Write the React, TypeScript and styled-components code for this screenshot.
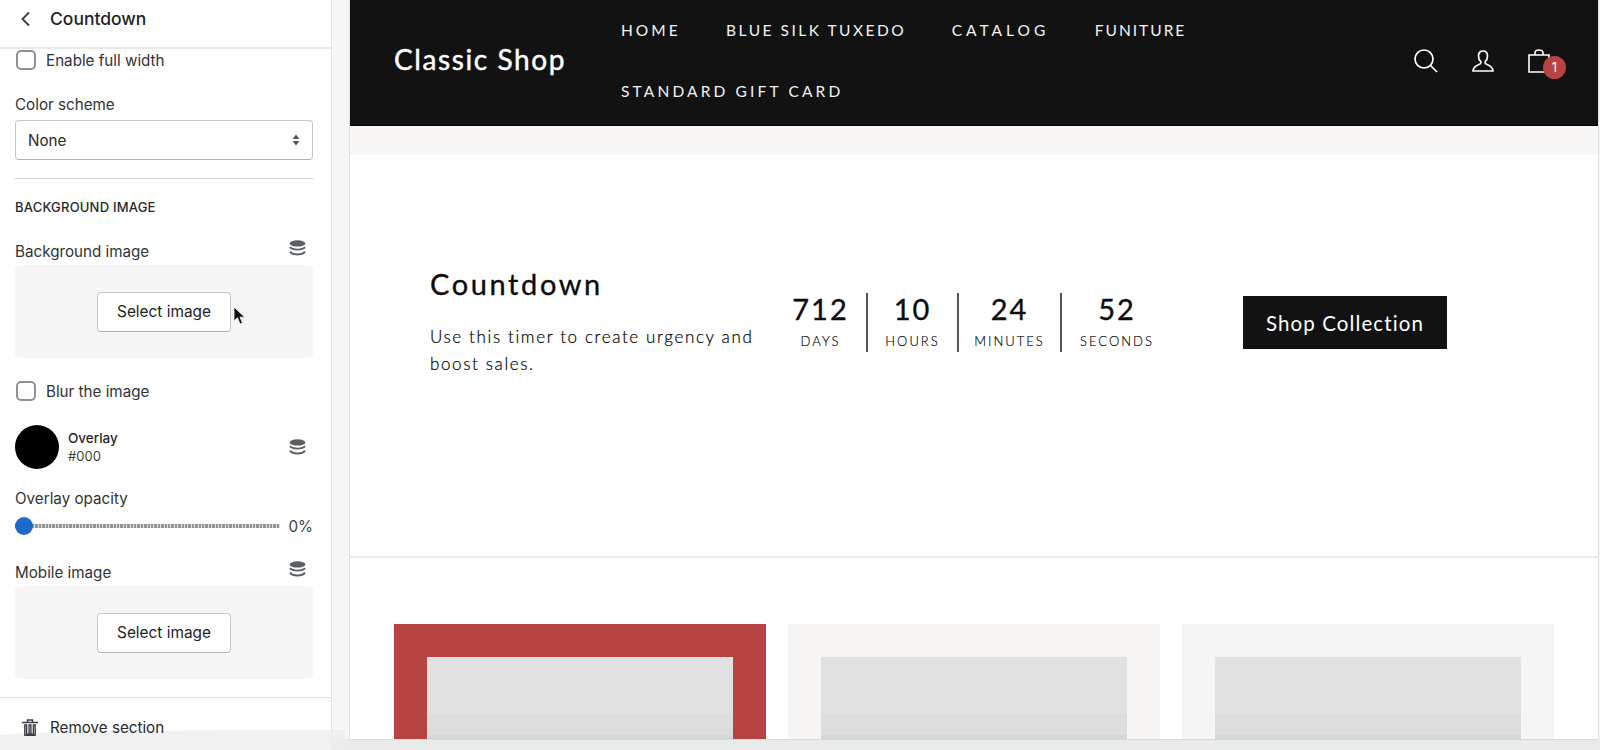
import React from "react";
import styled, { createGlobalStyle } from "styled-components";

const Global = createGlobalStyle`
  html, body { margin: 0; padding: 0; height: 100%; overflow: hidden; background: #f6f6f6; }
  #root { height: 100%; }
  * { box-sizing: border-box; }
`;

const Page = styled.div`
  position: relative;
  display: flex;
  width: 1600px;
  height: 750px;
  overflow: hidden;
  background: linear-gradient(#f6f6f6 0 739px, #e9eaea 739px);
`;

/* ---------- Sidebar ---------- */
const Sidebar = styled.aside`
  flex: 0 0 332px;
  height: 750px;
  background: #fff;
  border-right: 1px solid #e3e4e5;
  font-family: Inter, "Liberation Sans", sans-serif;
  color: #303438;
`;
const SideHeader = styled.header`
  display: flex;
  align-items: center;
  height: 49px;
  padding-left: 18px;
  gap: 16px;
  border-bottom: 2px solid #e7e8e9;
  font-size: 17.5px;
  font-weight: 500;
  color: #202326;
  padding-bottom: 10px;
`;
const SideBody = styled.div`
  padding: 1px 18px 0 15px;
`;
const CheckRow = styled.label<{ $mt?: number }>`
  display: flex;
  align-items: center;
  gap: 10px;
  height: 20px;
  padding-left: 1px;
  font-size: 15.2px;
  margin-top: ${(p) => p.$mt ?? 0}px;
`;
const Box = styled.span`
  width: 20px;
  height: 20px;
  border: 2px solid #8c9196;
  border-radius: 5px;
  background: #fff;
`;
const FieldLabel = styled.div<{ $mt: number }>`
  display: flex;
  justify-content: space-between;
  align-items: flex-end;
  margin-top: ${(p) => p.$mt}px;
  font-size: 15.2px;
  line-height: 18px;
  color: #303438;
`;
const LayerSlot = styled.span<{ $mb?: number }>`
  display: flex;
  margin-right: 7px;
  margin-bottom: ${(p) => p.$mb ?? 5}px;
`;
const Select = styled.div`
  display: flex;
  align-items: center;
  justify-content: space-between;
  height: 40px;
  margin-top: 6px;
  padding: 0 12px;
  border: 1px solid #c4c8cc;
  border-bottom-color: #aeb4b9;
  border-radius: 4px;
  font-size: 15.2px;
  color: #26292c;
`;
const Divider = styled.hr`
  margin: 18px 0 0;
  border: 0;
  border-top: 1px solid #cfd2d5;
`;
const Caps = styled.h3`
  margin: 21px 0 0;
  font-size: 13px;
  line-height: 14px;
  font-weight: 500;
  letter-spacing: 0.2px;
  color: #26292c;
`;
const Drop = styled.div`
  display: flex;
  align-items: center;
  justify-content: center;
  height: 93px;
  margin-top: 4px;
  background: #f5f5f5;
  border-radius: 5px;
`;
const SelectButton = styled.button`
  width: 134px;
  height: 40px;
  background: #fff;
  border: 1px solid #c4c8cc;
  border-bottom-color: #aeb4b9;
  border-radius: 4px;
  font: 400 15.4px Inter, "Liberation Sans", sans-serif;
  color: #202326;
`;
const Overlay = styled.div`
  display: flex;
  align-items: center;
  gap: 9px;
  margin-top: 24px;
`;
const Swatch = styled.span`
  width: 44px;
  height: 44px;
  border-radius: 50%;
  background: #000;
`;
const OverlayText = styled.div`
  flex: 1;
  font-size: 13px;
  line-height: 18px;
  color: #3b3f43;
  b { display: block; font-size: 13.5px; font-weight: 500; color: #26292c; }
`;
const SliderRow = styled.div`
  display: flex;
  align-items: center;
  margin-top: 9px;
  height: 18px;
  font-size: 15.2px;
  color: #3b3f43;
`;
const Track = styled.div`
  position: relative;
  flex: 1;
  height: 4px;
  margin-right: 9px;
  background: repeating-linear-gradient(90deg, #8f9397 0 2.4px, #e2e3e4 2.4px 3.4px);
`;
const Thumb = styled.span`
  position: absolute;
  left: 0;
  top: -7px;
  width: 18px;
  height: 18px;
  border-radius: 50%;
  background: #1c6bcb;
`;
const SideFooter = styled.div`
  position: relative;
  z-index: 1;
  display: flex;
  align-items: center;
  gap: 12px;
  height: 60px;
  margin-top: 18px;
  padding: 0 0 0 22px;
  border-top: 1px solid #e3e4e5;
  font-size: 15.2px;
  color: #26292c;
`;
const Cursor = styled.svg`
  position: absolute;
  left: 233px;
  top: 306px;
`;
const BottomFade = styled.svg`
  position: absolute;
  left: 0;
  bottom: 0;
  pointer-events: none;
`;

/* ---------- Preview ---------- */
const Preview = styled.main`
  flex: 0 0 1250px;
  margin-left: 17px;
  height: 740px;
  background: #fff;
  border-left: 1px solid #dfe0e1;
  border-right: 1px solid #dfe0e1;
  border-bottom: 1px solid #d8dada;
  font-family: Lato, "Open Sans", sans-serif;
  overflow: hidden;
`;
const ShopHeader = styled.header`
  display: flex;
  align-items: center;
  height: 126px;
  padding: 0 48px 4px 44px;
  background: #111211;
  color: #fff;
  border-bottom: 1px solid #000;
`;
const Logo = styled.div`
  flex: 0 0 227px;
  margin-top: -4px;
  font-size: 28px;
  font-weight: 400;
  letter-spacing: 1.6px;
  -webkit-text-stroke: 0.45px #fff;
`;
const Nav = styled.nav`
  flex: 1;
  display: flex;
  flex-wrap: wrap;
  column-gap: 45.5px;
  font-size: 15.5px;
  line-height: 61px;
  font-weight: 400;
  color: #f4f4f4;
  max-width: 640px;
`;
const NavItem = styled.span<{ $ls: number }>`
  letter-spacing: ${(p) => p.$ls}px;
`;
const Icons = styled.div`
  margin-left: auto;
  display: flex;
  align-items: center;
  gap: 34px;
`;
const CartSlot = styled.div`
  position: relative;
  display: flex;
`;
const Badge = styled.span`
  position: absolute;
  left: 15px;
  top: 7px;
  width: 23px;
  height: 23px;
  border-radius: 50%;
  background: #b94343;
  color: #fff;
  font: 400 13px/23px Inter, sans-serif;
  text-align: center;
`;
const Band = styled.div`
  height: 29px;
  background: #f9f7f5;
`;
const CountdownSection = styled.section`
  display: flex;
  align-items: center;
  height: 403px;
  padding: 0 0 66px 80px;
  border-bottom: 2px solid #ececec;
`;
const Intro = styled.div`
  flex: 0 0 345px;
  margin-top: -3px;
`;
const Title = styled.h2`
  margin: 0;
  font-size: 29px;
  line-height: 36px;
  font-weight: 400;
  letter-spacing: 2.6px;
  color: #0c0c0c;
  -webkit-text-stroke: 0.35px #0c0c0c;
`;
const Body = styled.p`
  margin: 21px 0 0;
  font-size: 17px;
  line-height: 27px;
  font-weight: 300;
  letter-spacing: 1.62px;
  color: #000;
  width: 335px;
  -webkit-text-stroke: 0.2px #000;
`;
const Timer = styled.div`
  display: flex;
  height: 59px;
`;
const Unit = styled.div<{ $w: number; $line?: boolean }>`
  width: ${(p) => p.$w}px;
  height: 59px;
  text-align: center;
  border-right: ${(p) => (p.$line ? "2px solid #555" : "0")};
`;
const Digits = styled.div`
  font-size: 29px;
  line-height: 30px;
  margin-top: 1px;
  font-weight: 400;
  letter-spacing: 2px;
  color: #0c0c0c;
  -webkit-text-stroke: 0.35px #0c0c0c;
`;
const UnitLabel = styled.div`
  margin-top: 9px;
  font-size: 13px;
  line-height: 16px;
  font-weight: 300;
  letter-spacing: 2px;
  color: #000;
  -webkit-text-stroke: 0.15px #000;
`;
const ShopButton = styled.button`
  width: 204px;
  height: 53px;
  margin-left: 71px;
  background: #111211;
  border: 0;
  color: #fff;
  font: 400 20.5px Lato, sans-serif;
  letter-spacing: 1.1px;
`;
const Cards = styled.section`
  display: grid;
  grid-template-columns: repeat(3, 372px);
  column-gap: 22px;
  padding: 66px 0 0 44px;
`;
const Card = styled.div<{ $bg: string }>`
  height: 115px;
  padding: 33px 33px 0;
  background: ${(p) => p.$bg};
`;
const CardImage = styled.div`
  height: 82px;
  background: linear-gradient(#e1e1e1 0 70%, #dddddd 70% 95%, #d6d8d8 95%);
`;

const Layers = () => (
  <svg width="17" height="16" viewBox="0 0 17 16" aria-hidden>
    <ellipse cx="8.5" cy="3.4" rx="7.8" ry="3.2" fill="#5c5f62" />
    <path d="M1 7.200c1.400 1.700 4.200 2.400 7.500 2.400s6.100-.7 7.500-2.400M1 11.600c1.400 1.900 4.200 2.900 7.500 2.900s6.100-1 7.500-2.900" fill="none" stroke="#5c5f62" strokeWidth="1.900" />
  </svg>
);

const Sort = () => (
  <svg width="8" height="12" viewBox="0 0 8 12" aria-hidden>
    <path d="M4 0.500 7.500 5H.5zM4 11.500.5 7h7z" fill="#54585c" />
  </svg>
);

const nav = [
  { t: "HOME", ls: 3 },
  { t: "BLUE SILK TUXEDO", ls: 2.5 },
  { t: "CATALOG", ls: 4 },
  { t: "FUNITURE", ls: 2 },
  { t: "STANDARD GIFT CARD", ls: 3.15 },
];

const units = [
  { n: "712", l: "DAYS", w: 93, line: true },
  { n: "10", l: "HOURS", w: 91, line: true },
  { n: "24", l: "MINUTES", w: 103, line: true },
  { n: "52", l: "SECONDS", w: 110, line: false },
];

export default function App() {
  return (
    <Page>
      <Global />
      <Sidebar>
        <SideHeader>
          <svg width="16" height="16" viewBox="0 0 16 16" aria-hidden>
            <path d="M11 1.500 4.500 8l6.500 6.500" fill="none" stroke="#3b3f43" strokeWidth="1.900" />
          </svg>
          Countdown
        </SideHeader>
        <SideBody>
          <CheckRow>
            <Box />
            Enable full width
          </CheckRow>
          <FieldLabel $mt={26}>Color scheme</FieldLabel>
          <Select>
            None
            <Sort />
          </Select>
          <Divider />
          <Caps>BACKGROUND IMAGE</Caps>
          <FieldLabel $mt={26}>
            Background image
            <LayerSlot>
              <Layers />
            </LayerSlot>
          </FieldLabel>
          <Drop>
            <SelectButton>Select image</SelectButton>
          </Drop>
          <CheckRow $mt={23}>
            <Box />
            Blur the image
          </CheckRow>
          <Overlay>
            <Swatch />
            <OverlayText>
              <b>Overlay</b>
              #000
            </OverlayText>
            <LayerSlot $mb={0}>
              <Layers />
            </LayerSlot>
          </Overlay>
          <FieldLabel $mt={21}>Overlay opacity</FieldLabel>
          <SliderRow>
            <Track>
              <Thumb />
            </Track>
            0%
          </SliderRow>
          <FieldLabel $mt={26}>
            Mobile image
            <LayerSlot>
              <Layers />
            </LayerSlot>
          </FieldLabel>
          <Drop>
            <SelectButton>Select image</SelectButton>
          </Drop>
        </SideBody>
        <SideFooter>
          <svg width="16" height="17" viewBox="0 0 16 17" aria-hidden>
            <path d="M0 3.500h16M5.500 3.500V1h5v2.500M2.800 6h1.800v9.200h6.800V6h1.800v10.500H2.800zM7.100 6h1.800v9.200H7.100z" fill="none" stroke="#3b3f43" strokeWidth="1.400" />
          </svg>
          Remove section
        </SideFooter>
      </Sidebar>
      <Preview>
        <ShopHeader>
          <Logo>Classic Shop</Logo>
          <Nav>
            {nav.map((n) => (
              <NavItem key={n.t} $ls={n.ls}>
                {n.t}
              </NavItem>
            ))}
          </Nav>
          <Icons>
            <svg width="24" height="24" viewBox="0 0 24 24" aria-hidden>
              <circle cx="10" cy="10" r="9" fill="none" stroke="#fff" strokeWidth="1.700" />
              <path d="m16.500 16.500 6.500 6.500" stroke="#fff" strokeWidth="1.700" />
            </svg>
            <svg width="22" height="22" viewBox="0 0 22 22" aria-hidden>
              <path d="M11 1c3 0 4.500 2.300 4.500 5 0 2.500-1 4.500-2.300 5.500v1.700c0 1.300 7.800 2.500 7.800 7.800H1c0-5.300 7.800-6.500 7.800-7.800v-1.700C7.500 10.500 6.500 8.500 6.500 6c0-2.700 1.500-5 4.500-5z" fill="none" stroke="#fff" strokeWidth="1.700" />
            </svg>
            <CartSlot>
              <svg width="22" height="24" viewBox="0 0 22 24" aria-hidden>
                <path d="M1 6h20v17H1zM7 6V4c0-4 8-4 8 0v2" fill="none" stroke="#fff" strokeWidth="1.600" />
              </svg>
              <Badge>1</Badge>
            </CartSlot>
          </Icons>
        </ShopHeader>
        <Band />
        <CountdownSection>
          <Intro>
            <Title>Countdown</Title>
            <Body>Use this timer to create urgency and boost sales.</Body>
          </Intro>
          <Timer>
            {units.map((u) => (
              <Unit key={u.l} $w={u.w} $line={u.line}>
                <Digits>{u.n}</Digits>
                <UnitLabel>{u.l}</UnitLabel>
              </Unit>
            ))}
          </Timer>
          <ShopButton>Shop Collection</ShopButton>
        </CountdownSection>
        <Cards>
          <Card $bg="#b84343">
            <CardImage />
          </Card>
          <Card $bg="#f7f5f4">
            <CardImage />
          </Card>
          <Card $bg="#f5f5f5">
            <CardImage />
          </Card>
        </Cards>
      </Preview>
      <Cursor width="12" height="19" viewBox="0 0 12 19" aria-hidden>
        <path d="M1 1v14l3.500-3.200L7 18l2.500-1-2.500-5.800h4.800z" fill="#111" stroke="#fff" strokeWidth="0.800" />
      </Cursor>
      <BottomFade width="345" height="24" viewBox="0 0 345 24" aria-hidden>
        <path d="M0 24V9C40 6 110 4 345 4V24z" fill="#ececec" opacity="0.75" />
      </BottomFade>
    </Page>
  );
}
